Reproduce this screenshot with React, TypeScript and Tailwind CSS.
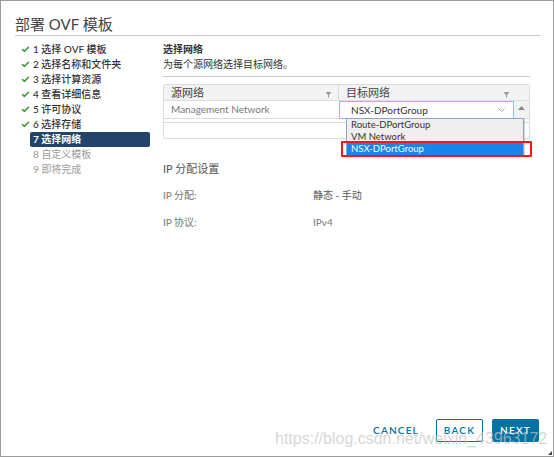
import { Check } from 'lucide-react';

const steps = [
  { n: 1, label: '选择 OVF 模板', done: true },
  { n: 2, label: '选择名称和文件夹', done: true },
  { n: 3, label: '选择计算资源', done: true },
  { n: 4, label: '查看详细信息', done: true },
  { n: 5, label: '许可协议', done: true },
  { n: 6, label: '选择存储', done: true },
  { n: 7, label: '选择网络', active: true },
  { n: 8, label: '自定义模板' },
  { n: 9, label: '即将完成' },
];

function FilterIcon() {
  return (
    <svg width="7" height="7" viewBox="0 0 7 7" className="text-[#999]">
      <path d="M0.5 1h6L4 4v2.5H3V4z" fill="currentColor" />
    </svg>
  );
}

export default function App() {
  return (
    <div
      className="relative w-[554px] h-[457px] bg-white border border-[#9c9c9c] overflow-hidden flex flex-col"
      style={{ fontFamily: 'Lato, "Noto Sans CJK SC", sans-serif' }}
    >
      {/* Title */}
      <div className="pl-[14px] pt-[13px] h-[34px] text-[15px] leading-[20px] text-[#444]">部署 OVF 模板</div>
      <div className="ml-[14px] w-[525px] h-px bg-[#c8c8c8]" />

      <div className="flex flex-1">
        {/* Steps */}
        <div className="w-[150px] pl-[20px] pt-[6px]">
          {steps.map((s) => (
            <div key={s.n} className="flex items-center h-[15px]">
              <div className="w-[9px] flex items-center">
                {s.done && <Check size={9} strokeWidth={4} className="text-[#3a9a3a]" />}
              </div>
              <div
                className={
                  s.active
                    ? 'w-[120px] h-[15px] pl-[3px] rounded-[2px] bg-[#23446a] text-white font-bold text-[10px] leading-[15px]'
                    : s.done
                      ? 'w-[120px] pl-[3px] text-[#333] font-medium text-[10px] leading-[15px]'
                      : 'w-[120px] pl-[3px] text-[#9a9a9a] text-[10px] leading-[15px]'
                }
              >
                {s.n} {s.label}
              </div>
            </div>
          ))}
        </div>

        {/* Content */}
        <div className="ml-[12px] w-[367px] pt-[6px]">
          <div className="h-[15px] text-[10px] leading-[15px] font-bold text-[#333]">选择网络</div>
          <div className="h-[15px] text-[10px] leading-[15px] text-[#333]">为每个源网络选择目标网络。</div>
          <div className="mt-[4px] h-px bg-[#c8c8c8]" />

          {/* Grid */}
          <div className="relative mt-[7px] border border-[#dcdcdc] rounded-[2px] text-[9.5px]">
            <div className="flex h-[16px] bg-[#f3f3f3] border-b border-[#dcdcdc] text-[#444] text-[11px] leading-[15px]">
              <div className="w-[175px] pl-[7px] pr-[6px] flex items-center justify-between border-r border-[#dcdcdc]">
                <span>源网络</span>
                <span className="mt-[4px]"><FilterIcon /></span>
              </div>
              <div className="flex-1 pl-[7px] pr-[19px] flex items-center justify-between">
                <span>目标网络</span>
                <span className="mt-[4px]"><FilterIcon /></span>
              </div>
            </div>
            <div className="flex h-[18px] border-b border-[#dcdcdc]">
              <div className="w-[175px] pl-[7px] text-[#777] text-[10px] leading-[17px]">Management Network</div>
              <div className="w-[175px] h-[18px] border border-[#7ccfe6] flex items-center justify-between pl-[11px] pr-[8px] text-[#333] text-[10px]">
                <span>NSX-DPortGroup</span>
                <svg width="7" height="4" viewBox="0 0 7 4" className="text-[#aaa]">
                  <path d="M0.5 0.5l3 3 3-3" stroke="currentColor" fill="none" />
                </svg>
              </div>
              <div className="flex-1 bg-[#f2f2f2] flex justify-center pt-[5px]">
                <svg width="7" height="4" viewBox="0 0 7 4" className="text-[#888]">
                  <path d="M0 4l3.5-4 3.5 4z" fill="currentColor" />
                </svg>
              </div>
            </div>
            <div className="h-[4px] border-b border-[#dcdcdc]" />
            <div className="h-[15px]" />

            {/* Dropdown list */}
            <div className="absolute left-[182px] top-[33px] w-[178px] border border-[#8ea4c8] bg-[#efefef] text-[9.5px] leading-[12px] text-[#333] shadow-[1px_1px_1px_rgba(0,0,0,0.15)]">
              <div className="h-[12px] pl-[4px]">Route-DPortGroup</div>
              <div className="h-[12px] pl-[4px]">VM Network</div>
              <div className="h-[12px] pl-[4px] bg-[#1b84ea] text-white">NSX-DPortGroup</div>
            </div>
            <div className="absolute left-[177px] top-[56px] w-[191px] h-[16px] border-2 border-[#f01818] rounded-[1px]" />
          </div>

          {/* IP settings */}
          <div className="mt-[22px] h-[16px] text-[11px] leading-[16px] text-[#555]">IP 分配设置</div>
          <div className="mt-[10px] flex h-[16px] text-[10px] leading-[16px]">
            <div className="w-[150px] text-[#777]">IP 分配:</div>
            <div className="text-[#555]">静态 - 手动</div>
          </div>
          <div className="mt-[11px] flex h-[16px] text-[10px] leading-[16px]">
            <div className="w-[150px] text-[#777]">IP 协议:</div>
            <div className="text-[#777]">IPv4</div>
          </div>
        </div>
      </div>

      {/* Footer */}
      <div className="flex justify-end items-center pr-[14px] pb-[14px] text-[10px] font-semibold tracking-[0.12em]">
        <button className="h-[23px] text-[#0072a3] mr-[17px]">CANCEL</button>
        <button className="h-[23px] w-[47px] border border-[#0072a3] rounded-[2px] text-[#0072a3] mr-[9px]">BACK</button>
        <button className="h-[23px] w-[47px] bg-[#0072a3] rounded-[2px] text-white">NEXT</button>
      </div>

      {/* watermark */}
      <div
        className="absolute left-[274px] top-[428px] text-[16px] leading-[20px] text-[#c4c4c4]/70 pointer-events-none"
        style={{ fontFamily: '"Liberation Sans", Arial, sans-serif' }}
      >
        https://blog.csdn.net/weixin_43963172
      </div>

      <svg width="4" height="4" viewBox="0 0 4 4" className="absolute right-[1px] bottom-[1px] text-[#444]">
        <path d="M4 0L0 4h4z" fill="currentColor" />
      </svg>
    </div>
  );
}
